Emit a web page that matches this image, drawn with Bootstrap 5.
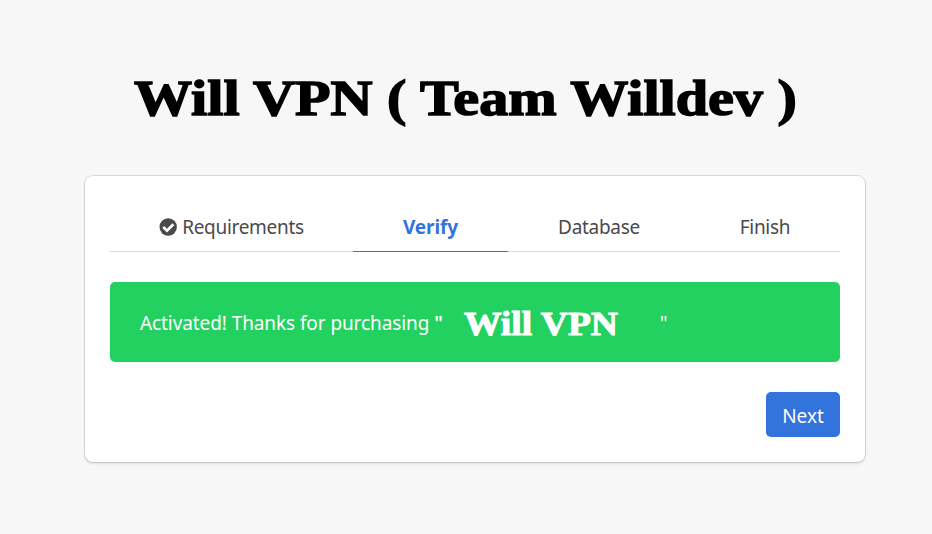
<!DOCTYPE html>
<html lang="en">
<head>
<meta charset="utf-8">
<meta name="viewport" content="width=device-width, initial-scale=1">
<title>Will VPN ( Team Willdev )</title>
<link href="https://cdn.jsdelivr.net/npm/bootstrap@5.3.0/dist/css/bootstrap.min.css" rel="stylesheet">
<style>
body{background:#f7f7f7;color:#4a4a4a;font-family:"Segoe UI","Noto Sans",sans-serif;font-size:19px;line-height:30px;height:534px;overflow:hidden}
.display-face{font-family:"Liberation Serif",serif;font-weight:700;white-space:nowrap}
.app-title{color:#000;font-size:51px;line-height:60px;padding-top:68px;height:176px;margin:0 0 0 134px}
.app-title span{display:inline-block;transform:scaleX(1.14);transform-origin:0 50%;-webkit-text-stroke:1.5px #000}
.installer{width:780px;height:286px;margin-left:85px;padding:26px 25px 0;border:0;border-radius:8px;box-shadow:0 2px 3px rgba(10,10,10,.1),0 0 0 1px rgba(10,10,10,.12)}
.steps{height:50px;border-bottom:1px solid #dbdbdb}
.steps .nav-link{height:50px;padding:10px 0 9px;color:#4a4a4a;border-bottom:1px solid transparent;letter-spacing:-.3px;text-align:center;white-space:nowrap}
.steps .nav-link.active{color:#3273dc;font-weight:700;border-color:#3273dc;letter-spacing:-.1px}
.w-req{width:243px}.w-ver{width:155px}.w-data{width:182px}.w-fin{width:150px}
.notice{background:#23d160;color:#fff;height:80px;margin-top:30px;padding:2px 30px 0;border-radius:5px;letter-spacing:-.09px}
.open-quote{font-weight:600}
.product{width:196px;margin:2px 0 0 21px;font-size:33px;letter-spacing:0}
.product span{display:inline-block;transform:scaleX(1.137);transform-origin:0 50%;-webkit-text-stroke:1px #fff}
.btn-next{width:74px;height:45px;margin-top:30px;padding:3px 0 0;background:#3273dc;color:#fff;font-size:19px;line-height:30px;border:0;border-radius:5px}
</style>
</head>
<body>
<h1 class="app-title display-face"><span>Will VPN ( Team Willdev )</span></h1>
<main class="card installer">
  <nav class="nav steps flex-nowrap">
    <a class="nav-link w-req d-flex justify-content-center align-items-center" href="#">
      <svg class="me-1" width="19" height="18" viewBox="0 0 19 18" aria-hidden="true"><circle cx="9.2" cy="9" r="8.7" fill="#4a4a4a"/><path d="M4.2 9.1 8 12.7 14.4 6.3" fill="none" stroke="#fff" stroke-width="2.7"/></svg>
      <span>Requirements</span></a>
    <a class="nav-link w-ver active" href="#">Verify</a>
    <a class="nav-link w-data" href="#">Database</a>
    <a class="nav-link w-fin" href="#">Finish</a>
  </nav>
  <div class="notice d-flex align-items-center">
    <span>Activated! Thanks for purchasing <span class="open-quote">"</span></span>
    <span class="product display-face"><span>Will VPN</span></span>
    <span>"</span>
  </div>
  <div class="d-flex justify-content-end"><button class="btn btn-next" type="button">Next</button></div>
</main>
<script src="https://cdn.jsdelivr.net/npm/bootstrap@5.3.0/dist/js/bootstrap.bundle.min.js"></script>
</body>
</html>
